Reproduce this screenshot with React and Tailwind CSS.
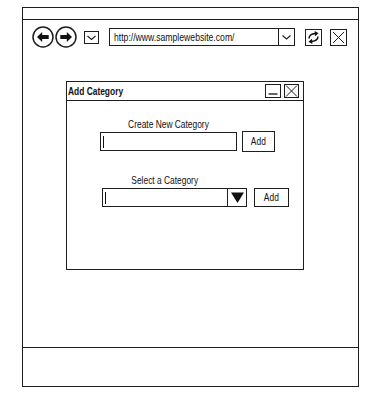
import React from "react";

const B = "border-[#1e1e1e]";

function CircleArrow({ dir }) {
  const flip = dir === "right" ? "scale(-1,1) translate(-22,0)" : undefined;
  return (
    <svg width="22" height="22" viewBox="0 0 22 22">
      <circle cx="11" cy="11" r="10" fill="none" stroke="#1e1e1e" strokeWidth="1.5" />
      <g transform={flip}>
        <polygon points="5,11 10.2,6 10.2,16" fill="#111" />
        <rect x="9.7" y="9" width="7" height="4" fill="#111" />
      </g>
    </svg>
  );
}

function Chevron({ w, h }) {
  const cx = w / 2;
  const cy = h / 2;
  return (
    <svg width={w} height={h} viewBox={`0 0 ${w} ${h}`}>
      <polyline
        points={`${cx - 4},${cy - 1.5} ${cx},${cy + 2} ${cx + 4},${cy - 1.5}`}
        fill="none"
        stroke="#1e1e1e"
        strokeWidth="1.1"
      />
    </svg>
  );
}

function Narrow({ children, origin = "origin-left", className = "" }) {
  return <span className={`inline-block scale-x-[0.8] whitespace-nowrap ${origin} ${className}`}>{children}</span>;
}

export default function App() {
  return (
    <div className="w-[383px] h-[394px] bg-white pt-[7px] pl-[22px] text-[#111] font-['Liberation_Sans',Arial,sans-serif]">
      <div className={`w-[337px] h-[380px] border ${B} flex flex-col`}>
        <div className={`h-[12px] border-b ${B}`} />
        <div className="flex-1 flex flex-col">
          {/* toolbar */}
          <div className="mt-[6px] pl-[9px] flex items-center h-[22px]">
            <CircleArrow dir="left" />
            <div className="ml-[1px]">
              <CircleArrow dir="right" />
            </div>
            <div className={`ml-[7px] w-[15px] h-[13px] border ${B} flex items-center justify-center`}>
              <Chevron w={13} h={11} />
            </div>
            <div className={`ml-[10px] w-[186px] h-[18px] border ${B} flex items-stretch`}>
              <div className="flex-1 pl-[4px] text-[10.8px] leading-[16px] overflow-hidden">
                <Narrow>http://www.samplewebsite.com/</Narrow>
              </div>
              <div className={`w-[16px] border-l ${B} flex items-center justify-center`}>
                <Chevron w={15} h={16} />
              </div>
            </div>
            <div className={`ml-[10px] w-[17px] h-[17px] border ${B} flex items-center justify-center`}>
              <svg width="15" height="15" viewBox="0 0 15 15">
                <path d="M3 8.5 Q3.2 4.2 9.2 3.6" fill="none" stroke="#111" strokeWidth="1.5" />
                <polygon points="8.6,1 12.6,3.2 9,6.2" fill="#111" />
                <path d="M12 6.5 Q11.8 10.8 5.8 11.4" fill="none" stroke="#111" strokeWidth="1.5" />
                <polygon points="6.4,14 2.4,11.8 6,8.8" fill="#111" />
              </svg>
            </div>
            <div className={`ml-[8px] w-[17px] h-[17px] border ${B} flex items-center justify-center`}>
              <svg width="15" height="15" viewBox="0 0 15 15">
                <path d="M2 2 L13 13 M13 2 L2 13" stroke="#1e1e1e" strokeWidth="1" />
              </svg>
            </div>
          </div>

          {/* dialog */}
          <div className={`mt-[33px] ml-[43px] w-[238px] h-[189px] border ${B} flex flex-col`}>
            <div className={`h-[19px] border-b ${B} flex items-center pl-[1px] pr-[4px]`}>
              <div className="flex-1 font-bold text-[10.5px] leading-[12px]">
                <Narrow>Add Category</Narrow>
              </div>
              <div className={`w-[16px] h-[14px] border ${B} flex items-center justify-center`}>
                <svg width="14" height="12" viewBox="0 0 14 12">
                  <path d="M2.5 9 H11.5" stroke="#111" strokeWidth="1.3" />
                </svg>
              </div>
              <div className={`ml-[3px] w-[15px] h-[14px] border ${B} flex items-center justify-center`}>
                <svg width="13" height="12" viewBox="0 0 13 12">
                  <path d="M1 0.5 L12 11.5 M12 0.5 L1 11.5" stroke="#1e1e1e" strokeWidth="1" />
                </svg>
              </div>
            </div>

            <div className="flex flex-col pt-[17px]">
              <div className="ml-[33px] w-[137px] text-center text-[10.5px] leading-[12px]">
                <Narrow origin="origin-center">Create New Category</Narrow>
              </div>
              <div className="ml-[33px] mt-[1px] flex items-center">
                <div className={`w-[137px] h-[19px] border ${B} flex items-center`}>
                  <div className="ml-[2px] w-[1px] h-[12px] bg-[#111]" />
                </div>
                <div className={`ml-[5px] w-[33px] h-[21px] border ${B} flex items-center justify-center text-[10.5px]`}>
                  <Narrow origin="origin-center">Add</Narrow>
                </div>
              </div>

              <div className="ml-[35px] mt-[22px] w-[126px] text-center text-[10.5px] leading-[12px]">
                <Narrow origin="origin-center">Select a Category</Narrow>
              </div>
              <div className="ml-[35px] mt-[2px] flex items-center">
                <div className={`w-[145px] h-[19px] border ${B} flex items-stretch`}>
                  <div className="flex-1 flex items-center">
                    <div className="ml-[2px] w-[1px] h-[12px] bg-[#111]" />
                  </div>
                  <div className={`w-[19px] border-l ${B} flex items-center justify-center`}>
                    <svg width="15" height="13" viewBox="0 0 15 13">
                      <polygon points="1,1.5 14,1.5 7.5,12" fill="#111" />
                    </svg>
                  </div>
                </div>
                <div className={`ml-[7px] w-[35px] h-[19px] border ${B} flex items-center justify-center text-[10.5px]`}>
                  <Narrow origin="origin-center">Add</Narrow>
                </div>
              </div>
            </div>
          </div>
        </div>
        <div className={`h-[39px] border-t ${B}`} />
      </div>
    </div>
  );
}
